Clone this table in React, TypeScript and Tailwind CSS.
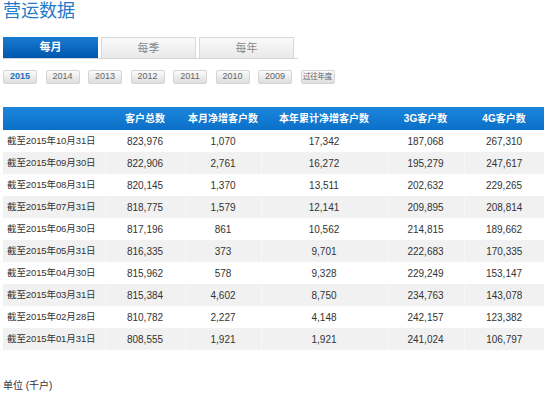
import React from 'react';

const font = { fontFamily: '"Liberation Sans", "Noto Sans CJK SC", sans-serif' };

const years = ['2015', '2014', '2013', '2012', '2011', '2010', '2009', '过往年度'];

const rows = [
  ['截至2015年10月31日', '823,976', '1,070', '17,342', '187,068', '267,310'],
  ['截至2015年09月30日', '822,906', '2,761', '16,272', '195,279', '247,617'],
  ['截至2015年08月31日', '820,145', '1,370', '13,511', '202,632', '229,265'],
  ['截至2015年07月31日', '818,775', '1,579', '12,141', '209,895', '208,814'],
  ['截至2015年06月30日', '817,196', '861', '10,562', '214,815', '189,662'],
  ['截至2015年05月31日', '816,335', '373', '9,701', '222,683', '170,335'],
  ['截至2015年04月30日', '815,962', '578', '9,328', '229,249', '153,147'],
  ['截至2015年03月31日', '815,384', '4,602', '8,750', '234,763', '143,078'],
  ['截至2015年02月28日', '810,782', '2,227', '4,148', '242,157', '123,382'],
  ['截至2015年01月31日', '808,555', '1,921', '1,921', '241,024', '106,797'],
];

const headers = ['', '客户总数', '本月净增客户数', '本年累计净增客户数', '3G客户数', '4G客户数'];
const widths = ['w-[102px]', 'w-[80px]', 'w-[76px]', 'w-[126px]', 'w-[77px]', 'w-[80px]'];

function yearStyle(i: number) {
  if (i === 0) return 'text-[#1f6fc0] font-bold text-[9px]';
  if (i === 7) return 'text-[#666] text-[7.5px] tracking-[-0.2px]';
  return 'text-[#666] text-[9px]';
}

export default function App() {
  return (
    <div className="w-[550px] h-[394px] bg-white overflow-hidden px-[3px]" style={font}>
      <h1 className="text-[18px] leading-[18px] pt-[2px] text-[#2479c8]">营运数据</h1>

      {/* period tabs */}
      <div className="mt-[17px] w-[295px] flex gap-[3px] border-b border-[#d6d6d6]">
        <div className="w-[95px] h-[21px] flex items-center justify-center text-[11px] font-bold text-white bg-gradient-to-b from-[#1a7bd3] to-[#0057ad]">
          每月
        </div>
        {['每季', '每年'].map((t) => (
          <div
            key={t}
            className="w-[95px] h-[21px] flex items-center justify-center text-[11px] text-[#8a8a8a] border border-b-0 border-[#d8d8d8] bg-gradient-to-b from-[#fafafa] to-[#e9e9e9]"
          >
            {t}
          </div>
        ))}
      </div>

      {/* year buttons */}
      <div className="mt-[11px] flex gap-[8.5px]">
        {years.map((y, i) => (
          <div
            key={y}
            className={`w-[34px] h-[14px] shrink-0 flex items-center justify-center whitespace-nowrap rounded-[2px] border border-[#d4d4d4] bg-gradient-to-b from-[#fbfbfb] to-[#dedede] ${yearStyle(i)}`}
          >
            {y}
          </div>
        ))}
      </div>

      {/* data table */}
      <table className="mt-[23px] w-[541px] table-fixed border-collapse text-[10px] text-[#333]">
        <thead>
          <tr className="h-[23px] bg-gradient-to-b from-[#1b86dc] to-[#0a6fc8]">
            {headers.map((h, i) => (
              <th key={i} className={`${widths[i]} whitespace-nowrap text-white text-[10px] font-bold text-center p-0`}>
                {h}
              </th>
            ))}
          </tr>
        </thead>
        <tbody>
          {rows.map((r, ri) => (
            <tr key={ri} className={`h-[22px] ${ri % 2 === 1 ? 'bg-[#f1f1f1]' : 'bg-white'}`}>
              {r.map((c, ci) => (
                <td
                  key={ci}
                  className={`p-0 whitespace-nowrap ${
                    ci === 0 ? 'text-left pl-[4px] text-[9.5px] tracking-[-0.1px]' : 'text-center'
                  } ${ci > 0 && ri % 2 === 1 ? 'border-l border-[#f7f7f7]' : ''}`}
                >
                  {c}
                </td>
              ))}
            </tr>
          ))}
        </tbody>
      </table>

      <div className="mt-[28px] text-[10px] text-[#333]">单位 (千户)</div>
    </div>
  );
}
